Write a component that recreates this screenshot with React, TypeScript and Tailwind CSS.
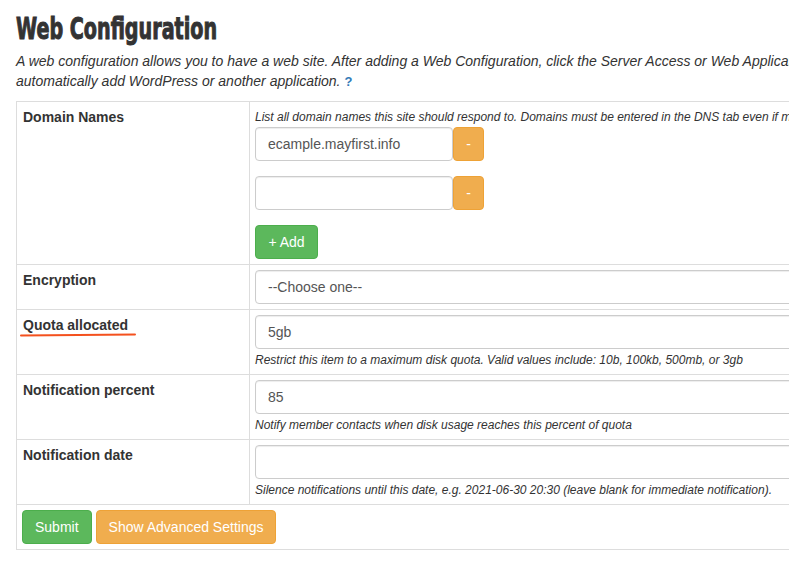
import React from 'react';

const inputCls =
  'h-[34px] rounded-[4px] border border-[#ccc] bg-white px-[12px] text-[14px] text-[#555] shadow-[inset_0_1px_1px_rgba(0,0,0,0.075)] outline-none';

function Help({ children }: { children: React.ReactNode }) {
  return <p className="mt-[3px] whitespace-nowrap text-[12px] italic leading-[17px] text-[#333]">{children}</p>;
}

function Row({ label, children, last }: { label: React.ReactNode; children: React.ReactNode; last?: boolean }) {
  return (
    <div className={`grid grid-cols-[233px_1fr] border-t border-[#ddd] ${last ? 'border-b' : ''}`}>
      <div className="border-r border-[#ddd] p-[5px] pl-[6px] text-[14px] font-bold leading-[20px]">{label}</div>
      <div className="p-[5px]">{children}</div>
    </div>
  );
}

export default function App() {
  return (
    <div className="h-[571px] w-screen overflow-hidden bg-white font-['Liberation_Sans',Arial,sans-serif] text-[#333]">
      <div className="w-[1100px] px-[16px]">
        {/* Header */}
        <h1 className="mt-[10px] h-[37px] origin-left scale-x-[0.71] whitespace-nowrap font-['DejaVu_Sans_Condensed','DejaVu_Sans',sans-serif] text-[30px] font-bold leading-[37px] text-[#333] [-webkit-text-stroke:1px_#333]">
          Web Configuration
        </h1>
        <p className="mt-[4px] text-[14px] italic leading-[20px]">
          A web configuration allows you to have a web site. After adding a Web Configuration, click the Server Access or Web Applications tab to
          <br />
          automatically add WordPress or another application.{' '}
          <span className="text-[13px] font-bold not-italic text-[#337ab7]">?</span>
        </p>

        {/* Form table */}
        <div className="mt-[9px] border-l border-r border-[#ddd]">
          <Row label="Domain Names">
            <p className="whitespace-nowrap text-[12px] italic leading-[20px]">
              List all domain names this site should respond to. Domains must be entered in the DNS tab even if managed elsewhere.
            </p>
            <div className="flex">
              <input className={`${inputCls} w-[198px]`} defaultValue="ecample.mayfirst.info" />
              <button className="h-[34px] w-[31px] rounded-[4px] border border-[#eea236] bg-[#f0ad4e] text-[14px] text-white">-</button>
            </div>
            <div className="mt-[15px] flex">
              <input className={`${inputCls} w-[198px]`} defaultValue="" />
              <button className="h-[34px] w-[31px] rounded-[4px] border border-[#eea236] bg-[#f0ad4e] text-[14px] text-white">-</button>
            </div>
            <button className="mt-[15px] h-[34px] w-[63px] rounded-[4px] border border-[#4cae4c] bg-[#5cb85c] text-[14px] text-white">+ Add</button>
          </Row>

          <Row label="Encryption">
            <div className={`${inputCls} flex w-full items-center`}>--Choose one--</div>
          </Row>

          <Row
            label={
              <span className="relative inline-block">
                Quota allocated
                <svg className="absolute left-[-3px] top-[18px]" width="116" height="4" viewBox="0 0 116 4">
                  <path d="M1 2.6 Q 58 2.2 115 1.4" stroke="#f4511e" strokeWidth="2" fill="none" strokeLinecap="round" />
                </svg>
              </span>
            }
          >
            <input className={`${inputCls} w-full`} defaultValue="5gb" />
            <Help>Restrict this item to a maximum disk quota. Valid values include: 10b, 100kb, 500mb, or 3gb</Help>
          </Row>

          <Row label="Notification percent">
            <input className={`${inputCls} w-full`} defaultValue="85" />
            <Help>Notify member contacts when disk usage reaches this percent of quota</Help>
          </Row>

          <Row label="Notification date">
            <input className={`${inputCls} w-full`} defaultValue="" />
            <Help>Silence notifications until this date, e.g. 2021-06-30 20:30 (leave blank for immediate notification).</Help>
          </Row>

          <div className="flex gap-[4px] border-t border-b border-[#ddd] p-[5px]">
            <button className="h-[34px] rounded-[4px] border border-[#4cae4c] bg-[#5cb85c] px-[12px] text-[14px] text-white">Submit</button>
            <button className="h-[34px] rounded-[4px] border border-[#eea236] bg-[#f0ad4e] px-[12px] text-[14px] text-white">Show Advanced Settings</button>
          </div>
        </div>
      </div>
    </div>
  );
}
